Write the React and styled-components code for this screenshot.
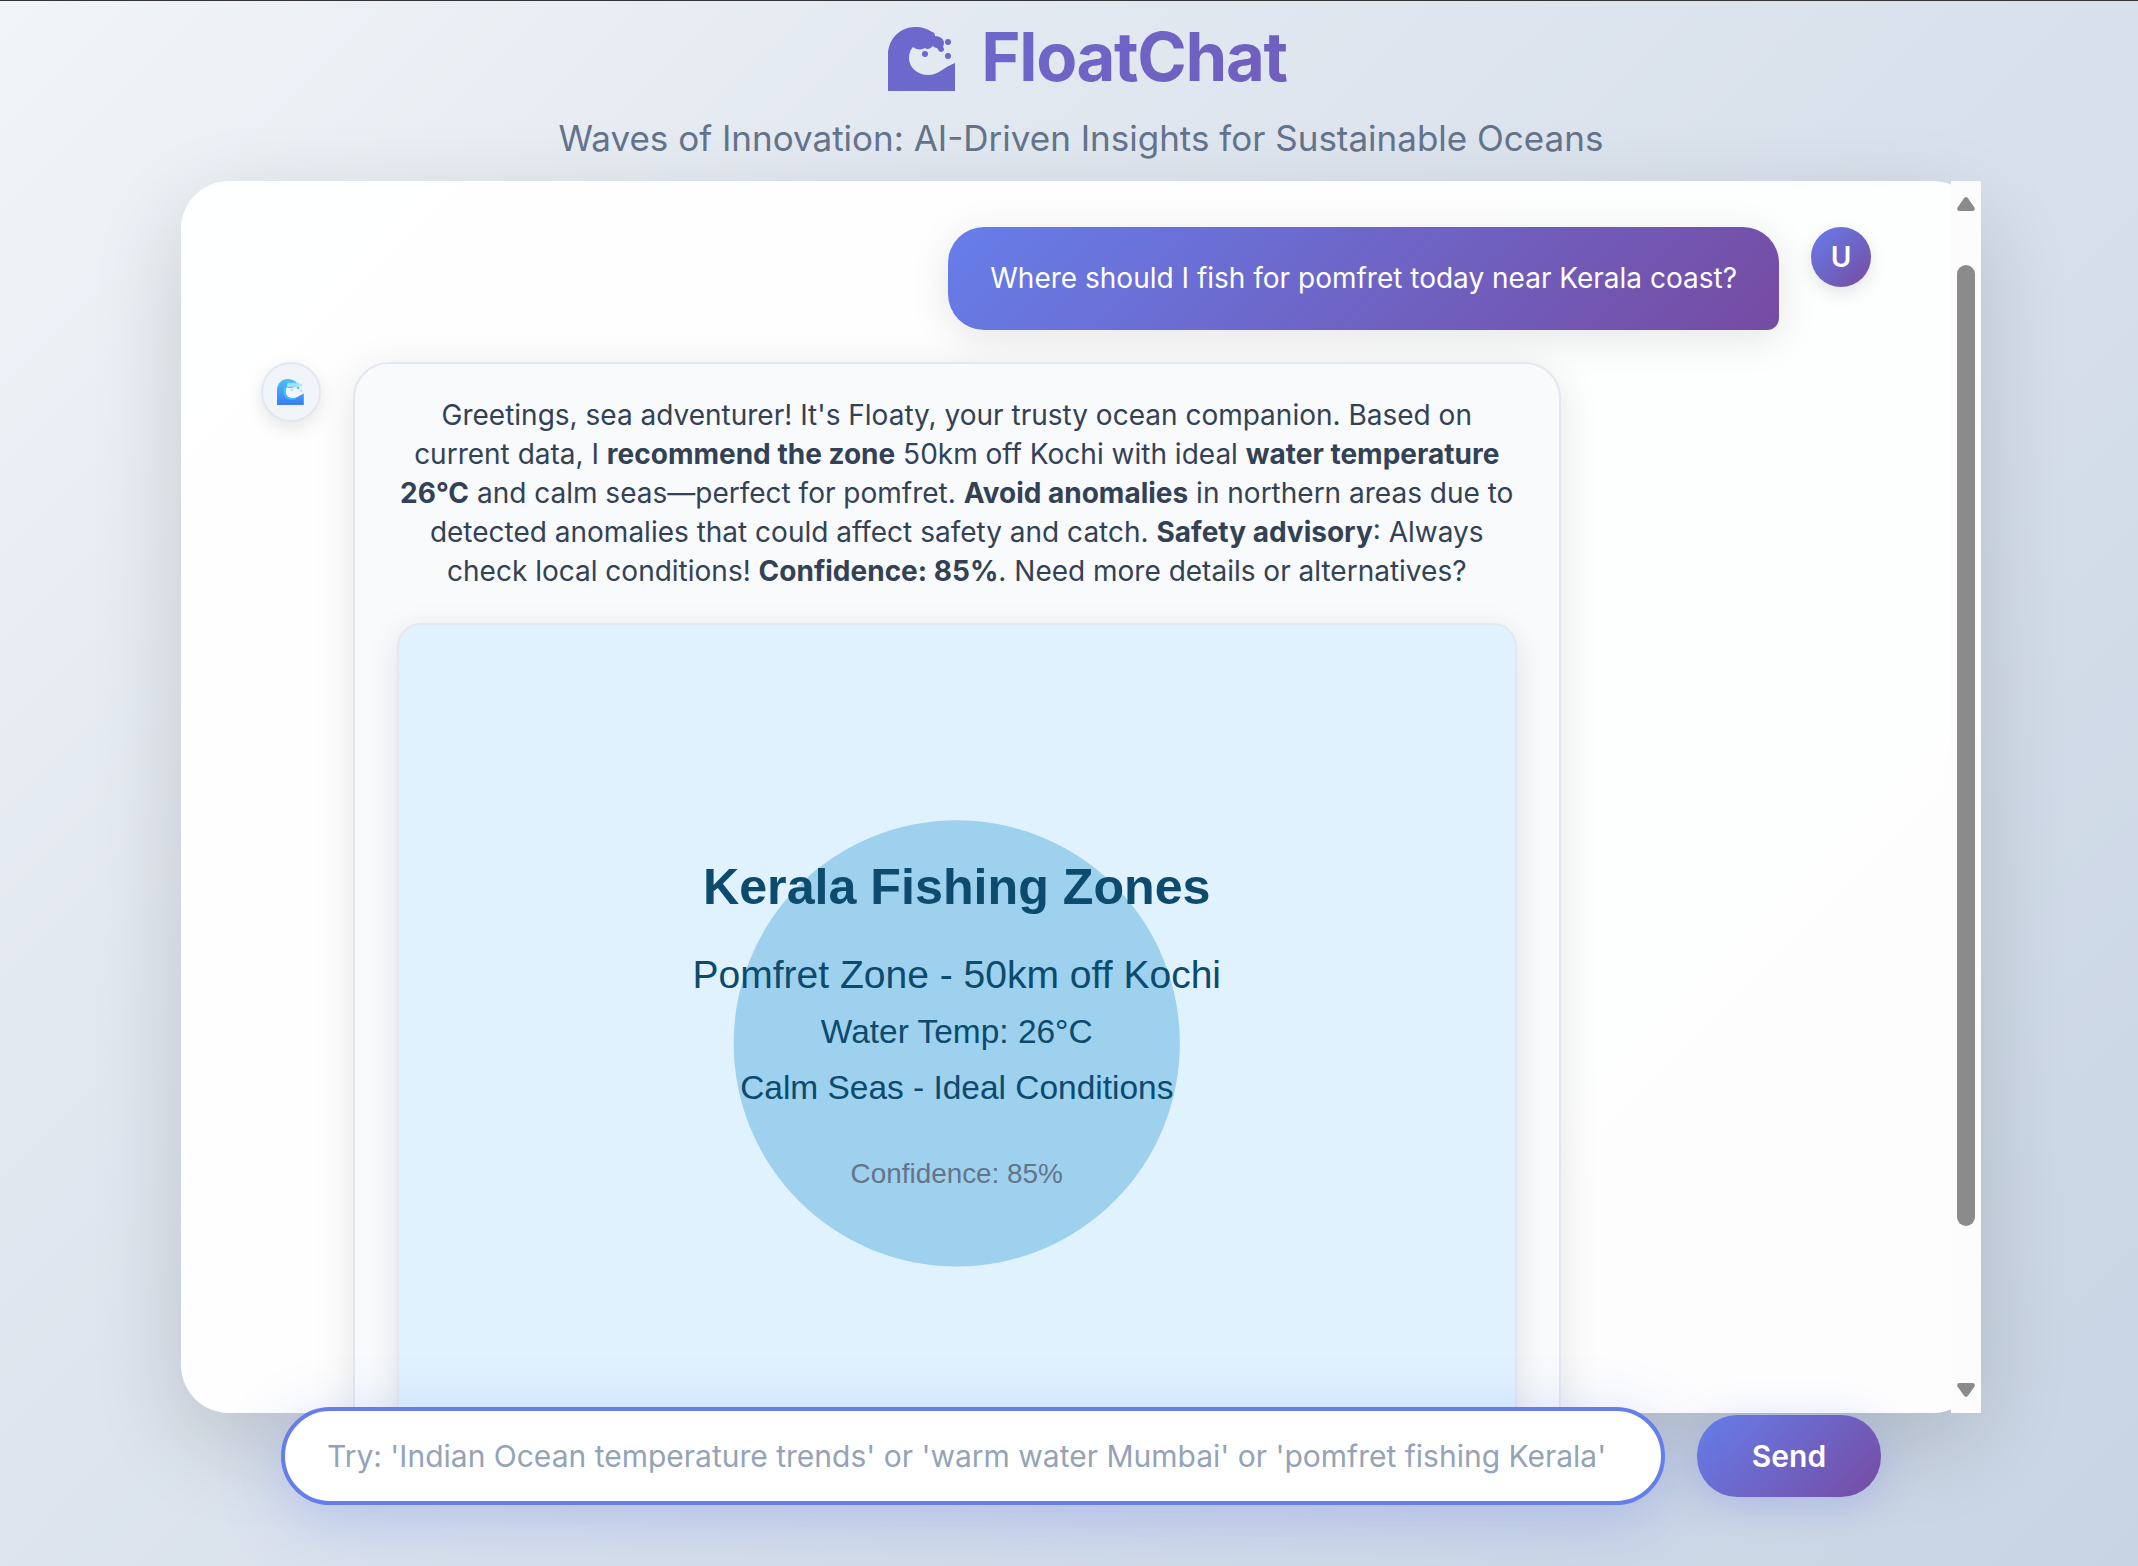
import React, { useState } from 'react';
import styled, { createGlobalStyle } from 'styled-components';

const accent = 'linear-gradient(135deg, #667eea 0%, #764ba2 100%)';

const GlobalStyle = createGlobalStyle`
  *, *::before, *::after { box-sizing: border-box; }
  body {
    margin: 0;
    font-family: Inter, "Liberation Sans", sans-serif;
    color: #334155;
  }
`;

const Page = styled.div`
  height: 100vh;
  display: flex;
  flex-direction: column;
  align-items: center;
  padding: 0 0 61px 24px;
  border-top: 1px solid #333338;
  background: linear-gradient(135deg, #f1f5f9 0%, #e2e8f0 30%, #c8d4e4 100%);
  overflow: hidden;
`;

const Column = styled.div`
  width: 100%;
  max-width: 1800px;
  flex: 1;
  min-height: 0;
  display: flex;
  flex-direction: column;
`;

const Header = styled.header`
  padding: 16px 0;
  text-align: center;
`;

const Title = styled.h1`
  margin: 0 0 14px;
  display: flex;
  align-items: center;
  justify-content: center;
  gap: 16px;
  font-size: 67px;
  line-height: 80px;
  font-weight: 700;
  letter-spacing: -0.02em;
  color: transparent;
  background: ${accent};
  -webkit-background-clip: text;
  background-clip: text;
`;

const Subtitle = styled.p`
  margin: 0;
  font-size: 35px;
  line-height: 54px;
  color: #64748b;
`;

const Card = styled.main`
  flex: 1;
  min-height: 0;
  display: flex;
  border-radius: 48px;
  background: rgba(255, 255, 255, 0.95);
  box-shadow: 0 30px 90px rgba(0, 0, 0, 0.15);
`;

const Messages = styled.div`
  flex: 1;
  min-width: 0;
  padding: 46px 80px 0;
  display: flex;
  flex-direction: column;
  gap: 32px;
  overflow: hidden;
`;

const MessageRow = styled.div`
  flex-shrink: 0;
  display: flex;
  align-items: flex-start;
  gap: 32px;
  flex-direction: ${(p) => (p.$user ? 'row-reverse' : 'row')};
`;

const Avatar = styled.div`
  flex: none;
  width: 60px;
  height: 60px;
  display: flex;
  align-items: center;
  justify-content: center;
  border-radius: 50%;
  border: ${(p) => (p.$user ? 'none' : '2px solid #e2e8f0')};
  background: ${(p) => (p.$user ? accent : '#f1f5f9')};
  color: #fff;
  font-size: 28px;
  font-weight: 600;
  box-shadow: 0 6px 18px rgba(0, 0, 0, 0.1);
`;

const Bubble = styled.div`
  max-width: 75%;
  padding: 32px 42px;
  font-size: 28px;
  line-height: 39px;
  text-align: center;
  border: ${(p) => (p.$user ? 'none' : '2px solid #e2e8f0')};
  border-radius: ${(p) => (p.$user ? '36px 36px 12px 36px' : '36px 36px 36px 12px')};
  background: ${(p) => (p.$user ? accent : '#f8fafc')};
  color: ${(p) => (p.$user ? '#fff' : '#334155')};
  box-shadow: 0 8px 40px rgba(0, 0, 0, 0.1);

  p { margin: 0; }
  strong { font-weight: 700; }
`;

const ZoneMap = styled.svg`
  display: block;
  width: 100%;
  margin-top: 32px;
  border: 2px solid #e2e8f0;
  border-radius: 24px;
  background: #e0f2fe;
  box-shadow: 0 8px 32px rgba(0, 0, 0, 0.1);
  font-family: "Liberation Sans", Arial, sans-serif;
`;

const ScrollRail = styled.div`
  flex: none;
  width: 30px;
  padding: 16px 6px;
  display: flex;
  flex-direction: column;
  background: #fcfcfc;

  svg { display: block; width: 18px; height: 14px; fill: #8b8b8b; }
`;

const ScrollTrack = styled.div`
  flex: 1;
  display: flex;
  flex-direction: column;
  padding-top: 54px;
`;

const ScrollThumb = styled.div`
  height: 86%;
  border-radius: 9px;
  background: #8b8b8b;
`;

const Composer = styled.form`
  margin: -6px 100px 0;
  display: flex;
  align-items: center;
  gap: 32px;
`;

const Prompt = styled.input`
  flex: 1;
  min-width: 0;
  height: 98px;
  padding: 0 42px;
  border: 4px solid #667eea;
  border-radius: 49px;
  outline: none;
  background: #fff;
  color: #334155;
  font-family: inherit;
  font-size: 30px;
  box-shadow: 0 16px 64px rgba(102, 126, 234, 0.3);
  z-index: 1;

  &::placeholder { color: #94a3b8; opacity: 1; }
`;

const SendButton = styled.button`
  width: 184px;
  height: 82px;
  border: none;
  border-radius: 40px;
  background: ${accent};
  color: #fff;
  font-family: inherit;
  font-size: 30px;
  font-weight: 600;
  box-shadow: 0 8px 40px rgba(102, 126, 234, 0.3);
  cursor: pointer;
`;

const wavePath =
  'M0 65 V28 C0 12 12 0 27 0 C34 0 40 2 44 5 C46 5 47 7 47 9 C52 9 56 12 56 16 C56 18 55 19 55 20 C57 22 56 25 53 25 C51 25 50 22 49 21 C47 21 46 20 45 19 C42 22 39 23 37 21 C34 23 28 23 25 20 C22 23 21 27 21 31 C21 41 30 48 40 48 C51 48 56 40 67 36 V65 Z';

function WaveMark() {
  return (
    <svg width="90" height="67" viewBox="-13 -3 90 67" aria-hidden="true">
      <g fill="#6d68cb">
        <path d={wavePath} />
        <circle cx="37" cy="27" r="3" />
        <circle cx="60" cy="15" r="3" />
        <circle cx="60" cy="29" r="3" />
      </g>
    </svg>
  );
}

function WaveEmoji() {
  return (
    <svg width="28" height="26" viewBox="0 0 70 65" aria-hidden="true">
      <defs>
        <linearGradient id="wave" x1="0" y1="0" x2="0" y2="1">
          <stop offset="0" stopColor="#4cc2f8" />
          <stop offset="1" stopColor="#3b7cf4" />
        </linearGradient>
      </defs>
      <path d={wavePath} fill="url(#wave)" />
      <path d="M25 12 C15 20 13 38 22 46 C31 55 47 52 54 43 C48 47 44 48 40 48 C30 48 22 41 22 31 C22 27 22 23 25 20 Z" fill="#45bdf8" />
      <g fill="#9be4fd">
        <circle cx="31" cy="15" r="6" />
        <circle cx="41" cy="15" r="6" />
        <circle cx="50" cy="16" r="6" />
        <circle cx="37" cy="27" r="3" />
        <circle cx="60" cy="15" r="3" />
        <circle cx="60" cy="29" r="3" />
      </g>
    </svg>
  );
}

function FishingZoneMap() {
  return (
    <ZoneMap viewBox="0 0 400 300" role="img" aria-label="Kerala Fishing Zones" textAnchor="middle">
      <circle cx="200" cy="150" r="80" fill="#0284c7" opacity="0.3" />
      <g fill="#0c4a6e">
        <text x="200" y="100" fontSize="18" fontWeight="bold">Kerala Fishing Zones</text>
        <text x="200" y="130" fontSize="14">Pomfret Zone - 50km off Kochi</text>
        <text x="200" y="150" fontSize="12">Water Temp: 26°C</text>
        <text x="200" y="170" fontSize="12">Calm Seas - Ideal Conditions</text>
      </g>
      <text x="200" y="200" fontSize="10" fill="#64748b">Confidence: 85%</text>
    </ZoneMap>
  );
}

export default function App() {
  const [draft, setDraft] = useState('');

  return (
    <>
      <GlobalStyle />
      <Page>
        <Column>
          <Header>
            <Title>
              <WaveMark />
              FloatChat
            </Title>
            <Subtitle>Waves of Innovation: AI-Driven Insights for Sustainable Oceans</Subtitle>
          </Header>

          <Card>
            <Messages>
              <MessageRow $user>
                <Avatar $user>U</Avatar>
                <Bubble $user>Where should I fish for pomfret today near Kerala coast?</Bubble>
              </MessageRow>
              <MessageRow>
                <Avatar><WaveEmoji /></Avatar>
                <Bubble>
                  <p>
                    Greetings, sea adventurer! It's Floaty, your trusty ocean companion. Based on
                    current data, I <strong>recommend the zone</strong> 50km off Kochi with
                    ideal <strong>water temperature 26°C</strong> and calm seas—perfect for
                    pomfret. <strong>Avoid anomalies</strong> in northern areas due to detected
                    anomalies that could affect safety and catch. <strong>Safety advisory</strong>:
                    Always check local conditions! <strong>Confidence: 85%</strong>. Need more
                    details or alternatives?
                  </p>
                  <FishingZoneMap />
                </Bubble>
              </MessageRow>
            </Messages>
            <ScrollRail aria-hidden="true">
              <svg viewBox="0 0 18 14"><path d="M7 1.2 Q9 -1 11 1.2 L17.5 10.5 Q18.6 14 15.5 14 H2.5 Q-.6 14 .5 10.5 Z" /></svg>
              <ScrollTrack><ScrollThumb /></ScrollTrack>
              <svg viewBox="0 0 18 14"><path d="M7 12.8 Q9 15 11 12.8 L17.5 3.5 Q18.6 0 15.5 0 H2.5 Q-.6 0 .5 3.5 Z" /></svg>
            </ScrollRail>
          </Card>

          <Composer onSubmit={(e) => e.preventDefault()}>
            <Prompt
              aria-label="Message"
              value={draft}
              onChange={(e) => setDraft(e.target.value)}
              placeholder="Try: 'Indian Ocean temperature trends' or 'warm water Mumbai' or 'pomfret fishing Kerala'"
            />
            <SendButton type="submit">Send</SendButton>
          </Composer>
        </Column>
      </Page>
    </>
  );
}
